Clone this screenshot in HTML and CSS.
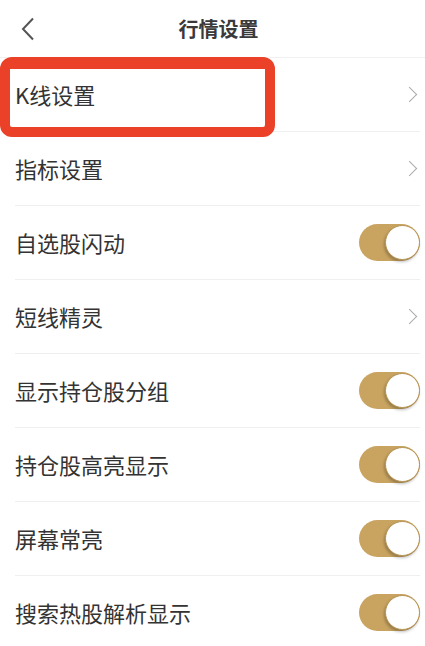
FILE: index.html
```html
<!DOCTYPE html>
<html lang="zh-CN">
<head>
    <meta charset="UTF-8">
    <meta name="viewport" content="width=device-width, initial-scale=1.0">
    <title>行情设置</title>
    <link rel="stylesheet" href="styles.css">
</head>
<body>

    <div class="header">
        <a class="back" href="#">
            <svg width="14" height="24" viewBox="0 0 14 24">
                <polyline points="12,1.5 2,12 12,22.5" fill="none" stroke="#555" stroke-width="2"/>
            </svg>
        </a>
        <h1>行情设置</h1>
    </div>

    <div class="list">
        <div class="row">
            <span class="label">K线设置</span>
            <span class="arrow"></span>
            <!-- highlight box around the first item -->
            <div class="mark"></div>
        </div>
        <div class="row">
            <span class="label">指标设置</span>
            <span class="arrow"></span>
        </div>
        <div class="row">
            <span class="label">自选股闪动</span>
            <span class="switch on"><i></i></span>
        </div>
        <div class="row">
            <span class="label">短线精灵</span>
            <span class="arrow"></span>
        </div>
        <div class="row">
            <span class="label">显示持仓股分组</span>
            <span class="switch on"><i></i></span>
        </div>
        <div class="row">
            <span class="label">持仓股高亮显示</span>
            <span class="switch on"><i></i></span>
        </div>
        <div class="row">
            <span class="label">屏幕常亮</span>
            <span class="switch on"><i></i></span>
        </div>
        <div class="row">
            <span class="label">搜索热股解析显示</span>
            <span class="switch on"><i></i></span>
        </div>
    </div>

</body>
</html>
```

FILE: styles.css
```css
body {
    margin: 0;
    background-color: #fff;
    font-family: "Noto Sans CJK SC", "Noto Sans", sans-serif;
    color: #333;
}
.header {
    position: relative;
    height: 57px;
    border-bottom: 1px solid #f0f0f0;
    display: flex;
    align-items: center;
    justify-content: center;
}
.header h1 {
    margin: 0 0 0 12px;
    font-size: 20px;
    font-weight: bold;
    color: #3a3a3a;
}
.back {
    position: absolute;
    left: 21px;
    top: 17px;
    display: block;
    height: 24px;
}
.list {
    padding-left: 15px;
    padding-right: 5px;
}
.row {
    position: relative;
    height: 73px;
    border-bottom: 1px solid #efefef;
    display: flex;
    align-items: center;
    justify-content: space-between;
}
.label {
    font-size: 22px;
    line-height: 1;
    margin-top: -2px;
}
.arrow {
    width: 10px;
    height: 10px;
    margin-right: 5px;
    border-top: 1.5px solid #aaa;
    border-right: 1.5px solid #aaa;
    transform: rotate(45deg);
}
.switch {
    position: relative;
    width: 61px;
    height: 37px;
    border-radius: 19px;
    background-color: #e5e5e5;
}
.switch.on {
    background-color: #c9a461;
}
.switch i {
    position: absolute;
    top: 1px;
    left: 1px;
    width: 33px;
    height: 33px;
    border-radius: 50%;
    background-color: #fff;
    border: 1px solid #b89350;
    box-shadow: -1px 2px 3px rgba(0, 0, 0, 0.25);
}
.switch.on i {
    left: auto;
    right: 0;
}
.mark {
    position: absolute;
    left: -15px;
    top: -1px;
    width: 255px;
    height: 58px;
    border-style: solid;
    border-color: #ea4128;
    border-width: 12px 10px 10px 10px;
    border-radius: 12px;
}
```
